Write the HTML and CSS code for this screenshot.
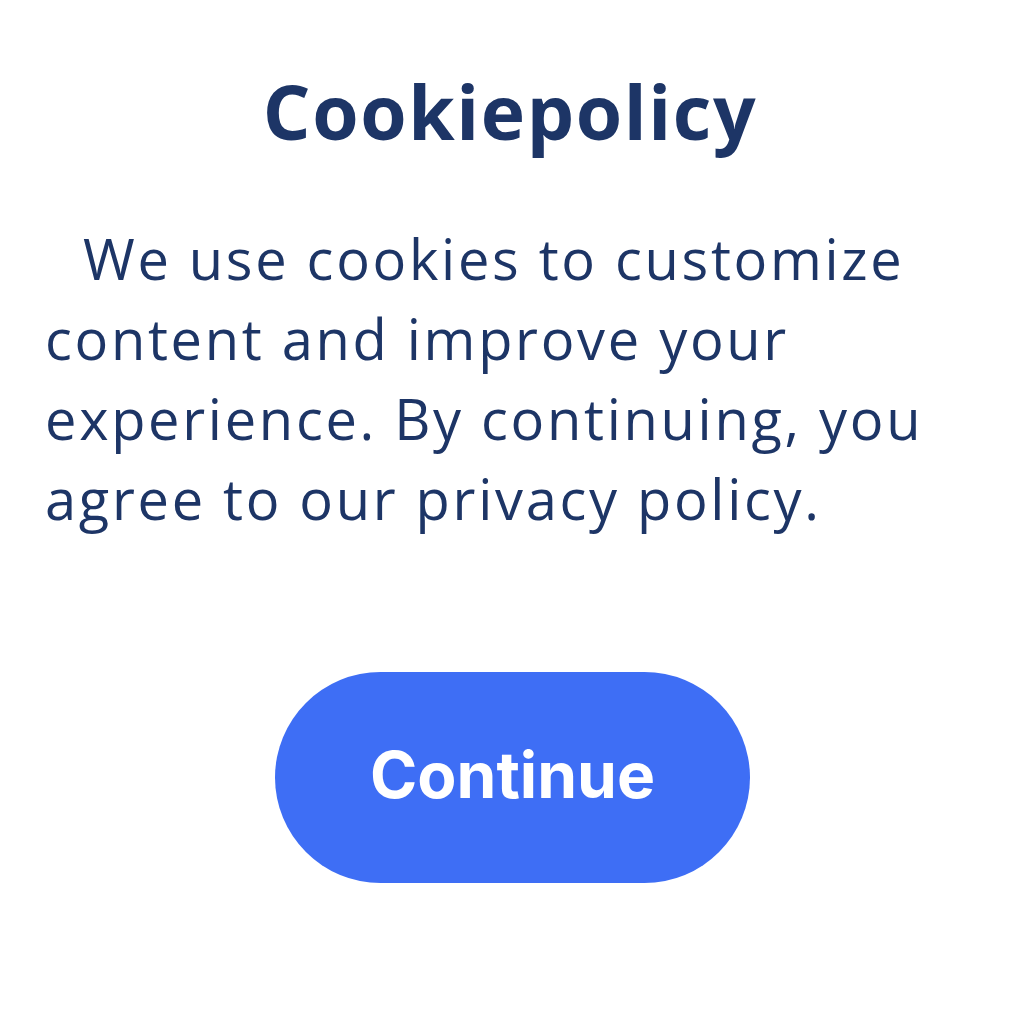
FILE: index.html
```html
<!DOCTYPE html>
<html lang="en">
<head>
<meta charset="utf-8">
<title>Cookie policy</title>
<link rel="stylesheet" href="styles.css">
</head>
<body>
<main class="cookie">
  <h1 class="cookie__title">Cookiepolicy</h1>
  <p class="cookie__text">We use cookies to customize<br>content and improve your<br>experience. By continuing, you<br>agree to our privacy policy.</p>
  <div class="cookie__actions">
    <button class="cookie__button" type="button">Continue</button>
  </div>
</main>
</body>
</html>
```

FILE: styles.css
```css
html, body {
  margin: 0;
  padding: 0;
  background: #ffffff;
}

.cookie {
  width: 1024px;
  height: 1024px;
  box-sizing: border-box;
  padding: 74px 0 0 0;
  display: flex;
  flex-direction: column;
  font-family: "Open Sans", "Noto Sans", sans-serif;
  color: #1d3566;
}

.cookie__title {
  margin: 0;
  font-size: 75px;
  line-height: 74px;
  font-weight: 700;
  letter-spacing: 1.6px;
  text-align: center;
  padding-right: 4px;
}

.cookie__text {
  margin: 70px 0 0 0;
  padding-left: 45px;
  font-size: 56px;
  line-height: 80px;
  font-weight: 400;
  letter-spacing: 2.7px;
  text-indent: 38px;
}

.cookie__actions {
  margin-top: 134px;
  display: flex;
  justify-content: center;
  padding-left: 1px;
}

.cookie__button {
  width: 475px;
  height: 211px;
  border: none;
  border-radius: 106px;
  background: #3e6ef5;
  color: #ffffff;
  font-family: "Inter", "Roboto", sans-serif;
  font-size: 64px;
  font-weight: 700;
  padding: 0 0 6px 0;
  display: flex;
  align-items: center;
  justify-content: center;
}
```
